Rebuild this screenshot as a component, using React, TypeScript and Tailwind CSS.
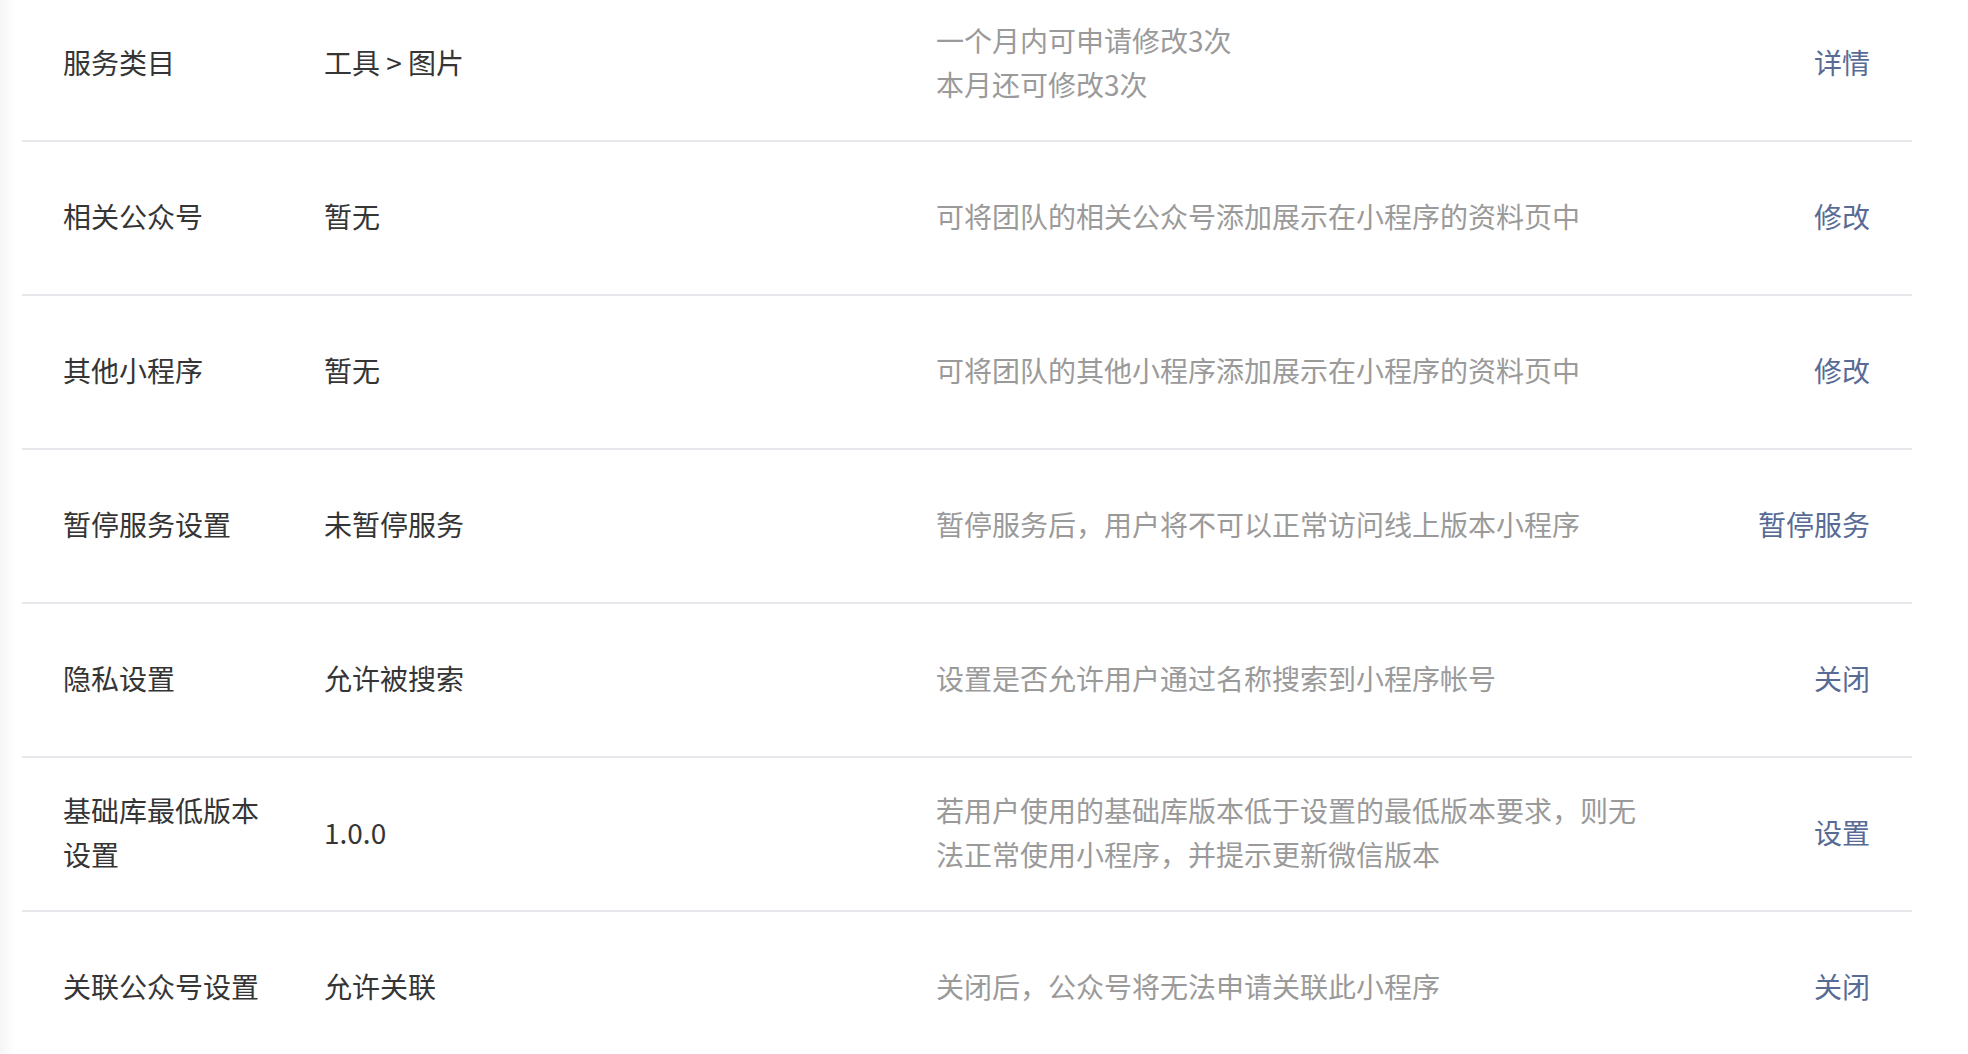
import React from "react";

type Row = {
  label: string;
  value: string;
  desc: string[];
  action: string;
};

const rows: Row[] = [
  { label: "服务类目", value: "工具 > 图片", desc: ["一个月内可申请修改3次", "本月还可修改3次"], action: "详情" },
  { label: "相关公众号", value: "暂无", desc: ["可将团队的相关公众号添加展示在小程序的资料页中"], action: "修改" },
  { label: "其他小程序", value: "暂无", desc: ["可将团队的其他小程序添加展示在小程序的资料页中"], action: "修改" },
  { label: "暂停服务设置", value: "未暂停服务", desc: ["暂停服务后，用户将不可以正常访问线上版本小程序"], action: "暂停服务" },
  { label: "隐私设置", value: "允许被搜索", desc: ["设置是否允许用户通过名称搜索到小程序帐号"], action: "关闭" },
  { label: "基础库最低版本设置", value: "1.0.0", desc: ["若用户使用的基础库版本低于设置的最低版本要求，则无法正常使用小程序，并提示更新微信版本"], action: "设置" },
  { label: "关联公众号设置", value: "允许关联", desc: ["关闭后，公众号将无法申请关联此小程序"], action: "关闭" },
];

export default function App() {
  return (
    <div
      className="flex h-[1054px] w-full overflow-hidden bg-white text-[28px] leading-[44px] text-[#353535]"
      style={{ fontFamily: '"PingFang SC", "Noto Sans CJK SC", "Noto Sans", sans-serif' }}
    >
      <div className="w-[16px] shrink-0 bg-gradient-to-r from-[#f6f6f6] to-white" />
      <div className="ml-[6px] w-[1890px] shrink-0 -mt-[12px]">
        {rows.map((r, i) => (
          <div
            key={i}
            className="flex h-[154px] items-center border-b-2 border-[#e7e7eb] pb-[4px] pl-[41px] pr-[42px]"
          >
            <div className="w-[261px] shrink-0 pr-[50px]">{r.label}</div>
            <div className="w-[612px] shrink-0">{r.value}</div>
            <div className="w-[712px] shrink-0 text-[#9a9a9a]">
              {r.desc.map((d, j) => (
                <div key={j}>{d}</div>
              ))}
            </div>
            <div className="flex-1 text-right text-[#576b95]">{r.action}</div>
          </div>
        ))}
      </div>
    </div>
  );
}
